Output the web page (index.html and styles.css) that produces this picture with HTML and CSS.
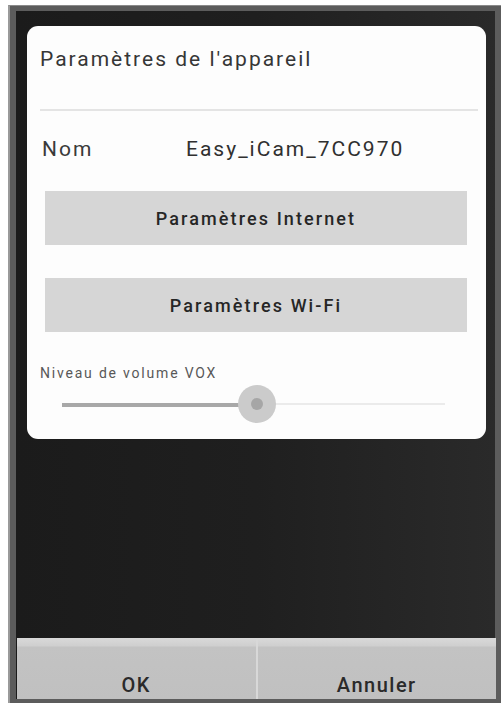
FILE: index.html
```html
<!DOCTYPE html>
<html lang="fr">
<head>
<meta charset="utf-8">
<title>Paramètres de l'appareil</title>
<link rel="stylesheet" href="styles.css">
</head>
<body>
<div class="frame">
  <div class="screen">
    <div class="card">
      <div class="title">Paramètres de l'appareil</div>
      <div class="sep"></div>
      <div class="name-row">
        <span class="name-label">Nom</span>
        <span class="name-value">Easy_iCam_7CC970</span>
      </div>
      <div class="btn btn-first">Paramètres Internet</div>
      <div class="btn btn-second">Paramètres Wi-Fi</div>
      <div class="vox-label">Niveau de volume VOX</div>
      <div class="slider">
        <div class="track">
          <div class="track-fill"></div>
          <div class="thumb"><div class="thumb-dot"></div></div>
        </div>
      </div>
    </div>
    <div class="spacer"></div>
    <div class="actions">
      <div class="action">OK</div>
      <div class="action">Annuler</div>
    </div>
  </div>
</div>
</body>
</html>
```

FILE: styles.css
```css
html, body {
  margin: 0;
  padding: 0;
  background: #ffffff;
}

body {
  font-family: Roboto, "Liberation Sans", sans-serif;
}

.frame {
  box-sizing: border-box;
  width: 493px;
  height: 698px;
  margin: 5px 0 0 8px;
  padding: 5px 6px 4px 6px;
  background: #5c5c5c;
  border-left: 2px solid #9a9a9a;
  border-top: 1px solid #8a8a8a;
}

.screen {
  display: flex;
  flex-direction: column;
  height: 100%;
  background: linear-gradient(to right, #1b1b1b 0%, #1f1f1f 50%, #2a2a2a 100%);
}

.card {
  height: 413px;
  margin: 15px 9px 0 11px;
  background: #fdfdfd;
  border-radius: 11px;
  display: flex;
  flex-direction: column;
}

.title {
  height: 83px;
  padding-left: 13px;
  display: flex;
  align-items: center;
  padding-bottom: 18px;
  box-sizing: border-box;
  font-size: 21px;
  letter-spacing: 2px;
  color: #363636;
}

.sep {
  height: 2px;
  margin: 0 8px 0 13px;
  background: #e4e4e4;
}

.name-row {
  height: 77px;
  display: flex;
  align-items: center;
  padding-left: 15px;
  padding-bottom: 2px;
  box-sizing: border-box;
  font-size: 21px;
  letter-spacing: 2px;
  color: #3a3a3a;
}

.name-label {
  width: 144px;
}

.name-value {
  color: #303030;
}

.btn {
  height: 54px;
  margin: 0 19px 0 18px;
  background: #d6d6d6;
  display: flex;
  align-items: center;
  justify-content: center;
  font-size: 18px;
  font-weight: 500;
  letter-spacing: 2.1px;
  color: #262626;
}

.btn-first {
  margin-top: 3px;
}

.btn-second {
  margin-top: 33px;
}

.vox-label {
  margin-top: 33px;
  padding-left: 13px;
  font-size: 14px;
  letter-spacing: 1.8px;
  line-height: 16px;
  color: #585858;
}

.slider {
  padding: 0 41px 0 35px;
  margin-top: 23px;
}

.track {
  position: relative;
  height: 2px;
  background: #ebebeb;
}

.track-fill {
  width: 51%;
  height: 4px;
  margin-top: -1px;
  background: #a8a8a8;
}

.thumb {
  position: absolute;
  left: 51%;
  top: 1px;
  width: 38px;
  height: 38px;
  margin: -19px 0 0 -19px;
  border-radius: 50%;
  background: #cbcbcb;
  display: flex;
  align-items: center;
  justify-content: center;
}

.thumb-dot {
  width: 12px;
  height: 12px;
  border-radius: 50%;
  background: #a6a6a6;
}

.spacer {
  flex: 1;
}

.actions {
  height: 61px;
  margin: 0 -1px 0 1px;
  display: flex;
  background: linear-gradient(to bottom, #d9d9d9 0, #cfcfcf 8px, #c3c3c3 9px, #c0c0c0 100%);
}

.action {
  flex: 1;
  display: flex;
  align-items: flex-end;
  justify-content: center;
  padding-bottom: 2px;
  font-size: 20px;
  font-weight: 500;
  letter-spacing: 1.5px;
  color: #2a2a2a;
}

.action + .action {
  border-left: 2px solid #d8d8d8;
}
```
